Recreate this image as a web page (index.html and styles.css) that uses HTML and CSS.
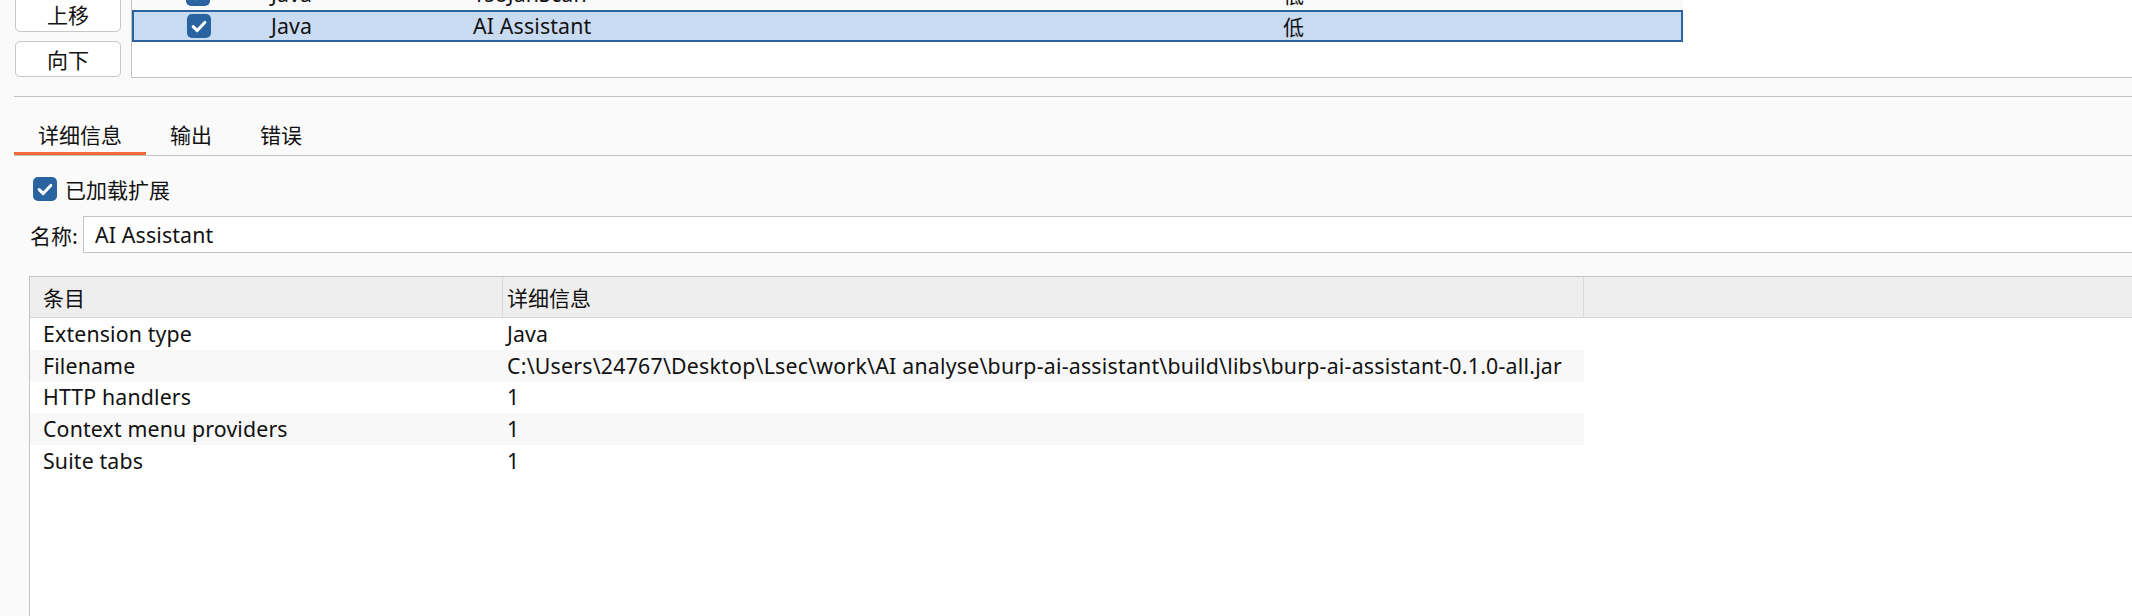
FILE: index.html
```html
<!DOCTYPE html>
<html lang="zh-CN">
<head>
<meta charset="utf-8">
<title>Extensions</title>
<link rel="stylesheet" href="styles.css">
</head>
<body>
<div class="top">
  <div class="btn-col">
    <button class="btn">上移</button>
    <button class="btn">向下</button>
  </div>
  <div class="ext-panel">
    <div class="ext-rows">
      <div class="ext-row alt">
        <div class="c c-chk"><svg class="chk" viewBox="0 0 24 24"><rect x="0" y="0" width="24" height="24" rx="5"/><path d="M6.2 12.6 L10.2 16.6 L17.8 8.4"/></svg></div>
        <div class="c">Java</div>
        <div class="c">YsoJanScan</div>
        <div class="c cjk">低</div>
      </div>
      <div class="ext-row sel">
        <div class="c c-chk"><svg class="chk" viewBox="0 0 24 24"><rect x="0" y="0" width="24" height="24" rx="5"/><path d="M6.2 12.6 L10.2 16.6 L17.8 8.4"/></svg></div>
        <div class="c">Java</div>
        <div class="c">AI Assistant</div>
        <div class="c cjk">低</div>
      </div>
    </div>
  </div>
</div>
<div class="split"></div>
<div class="details">
  <div class="tabs">
    <div class="tab active">详细信息</div>
    <div class="tab">输出</div>
    <div class="tab">错误</div>
  </div>
  <div class="loaded">
    <svg class="chk" viewBox="0 0 24 24"><rect x="0" y="0" width="24" height="24" rx="5"/><path d="M6.2 12.6 L10.2 16.6 L17.8 8.4"/></svg>
    <span>已加载扩展</span>
  </div>
  <div class="name-row">
    <span class="name-label">名称:</span>
    <div class="name-input">AI Assistant</div>
  </div>
  <div class="info-table">
    <div class="thead">
      <div class="th col1">条目</div>
      <div class="th col2">详细信息</div>
      <div class="th filler"></div>
    </div>
    <div class="trow">
      <div class="td col1">Extension type</div>
      <div class="td col2">Java</div>
    </div>
    <div class="trow alt">
      <div class="td col1">Filename</div>
      <div class="td col2 path">C:\Users\24767\Desktop\Lsec\work\AI analyse\burp-ai-assistant\build\libs\burp-ai-assistant-0.1.0-all.jar</div>
    </div>
    <div class="trow">
      <div class="td col1">HTTP handlers</div>
      <div class="td col2">1</div>
    </div>
    <div class="trow alt">
      <div class="td col1">Context menu providers</div>
      <div class="td col2">1</div>
    </div>
    <div class="trow">
      <div class="td col1">Suite tabs</div>
      <div class="td col2">1</div>
    </div>
  </div>
</div>
</body>
</html>
```

FILE: styles.css
```css
html, body {
  margin: 0;
  padding: 0;
}
body {
  width: 2132px;
  height: 616px;
  overflow: hidden;
  background: #fafafa;
  color: #111;
  font-family: "Noto Sans", "Noto Sans CJK SC", sans-serif;
  font-size: 21.3px;
  letter-spacing: 0.15px;
}
.cjk {
  font-family: "Noto Sans CJK SC", sans-serif;
  font-size: 21px;
  letter-spacing: 0;
}

/* ---------- top area ---------- */
.top {
  display: flex;
  height: 78px;
}
.btn-col {
  display: flex;
  flex-direction: column;
  gap: 9px;
  padding-left: 15px;
  margin-top: -4px;
}
.btn {
  width: 106px;
  height: 36px;
  box-sizing: border-box;
  background: #fff;
  border: 1px solid #c9c6c6;
  border-radius: 5px;
  font-family: "Noto Sans CJK SC", sans-serif;
  font-size: 21px;
  letter-spacing: 0;
  line-height: 1;
  color: #111;
  padding: 0;
}
.ext-panel {
  flex: 1;
  margin-left: 10px;
  background: #fff;
  border-left: 1px solid #c6c2c2;
  border-bottom: 1px solid #c6c2c2;
  height: 77px;
  overflow: hidden;
}
.ext-rows {
  margin-top: -22px;
}
.ext-row {
  display: grid;
  grid-template-columns: 132px 202px 810px 1fr;
  width: 1551px;
  height: 32px;
  box-sizing: border-box;
  align-items: center;
  line-height: 24px;
}
.ext-row.alt {
  background: #fafafa;
}
.ext-row.sel {
  background: #c9dbf1;
  border: 2px solid #2964a0;
}
.ext-row .c {
  padding-left: 7px;
  white-space: nowrap;
}
.ext-row.sel .c {
  padding-left: 5px;
}
.ext-row .c-chk {
  display: flex;
  justify-content: center;
  padding-left: 0;
}
.ext-row.sel .c-chk {
  padding-left: 0;
  margin-left: -2px;
}
.chk {
  width: 24px;
  height: 24px;
  display: block;
}
.chk rect {
  fill: #2964a0;
}
.chk path {
  fill: none;
  stroke: #fff;
  stroke-width: 3;
  stroke-linecap: round;
  stroke-linejoin: round;
}

/* ---------- split ---------- */
.split {
  height: 18px;
  margin-left: 14px;
  border-bottom: 1px solid #c6c2c2;
}

/* ---------- tabs ---------- */
.tabs {
  display: flex;
  margin-left: 14px;
  border-bottom: 1px solid #c6c2c2;
}
.tab {
  padding: 27px 24px 7px;
  line-height: 21px;
  border-bottom: 3px solid transparent;
  font-family: "Noto Sans CJK SC", sans-serif;
  font-size: 21px;
  letter-spacing: 0;
  white-space: nowrap;
}
.tab.active {
  border-bottom-color: #f5693b;
}

/* ---------- loaded checkbox ---------- */
.loaded {
  display: flex;
  align-items: center;
  gap: 8px;
  margin-top: 21px;
  padding-left: 33px;
  height: 24px;
  font-family: "Noto Sans CJK SC", sans-serif;
  font-size: 21px;
  letter-spacing: 0;
}

/* ---------- name row ---------- */
.name-row {
  display: flex;
  align-items: center;
  margin-top: 15px;
  padding-left: 30px;
}
.name-label {
  width: 53px;
  font-family: "Noto Sans CJK SC", sans-serif;
  font-size: 21px;
  letter-spacing: 0;
}
.name-input {
  flex: 1;
  height: 37px;
  box-sizing: border-box;
  margin-right: -40px;
  background: #fff;
  border: 1px solid #c6c2c2;
  padding-left: 11px;
  line-height: 35px;
}

/* ---------- info table ---------- */
.info-table {
  margin-top: 23px;
  margin-left: 29px;
  margin-right: -40px;
  height: 400px;
  background: #fff;
  border-left: 1px solid #c6c2c2;
  border-top: 1px solid #c6c2c2;
}
.thead {
  display: grid;
  grid-template-columns: 473px 1081px 1fr;
  height: 40px;
  background: #eeeeee;
  border-bottom: 1px solid #d6d6d6;
}
.th {
  display: flex;
  align-items: center;
  box-sizing: border-box;
  border-right: 1px solid #d8d8d8;
  font-family: "Noto Sans CJK SC", sans-serif;
  font-size: 21px;
  letter-spacing: 0;
}
.th.filler {
  border-right: none;
}
.trow {
  display: grid;
  grid-template-columns: 473px 1081px;
  width: 1554px;
  height: 31.75px;
  align-items: center;
  line-height: 24px;
}
.trow.alt {
  background: #f8f8f8;
}
.td {
  white-space: nowrap;
}
.td.path {
  letter-spacing: 0.23px;
}
.col1 {
  padding-left: 13px;
}
.col2 {
  padding-left: 4px;
}
```
